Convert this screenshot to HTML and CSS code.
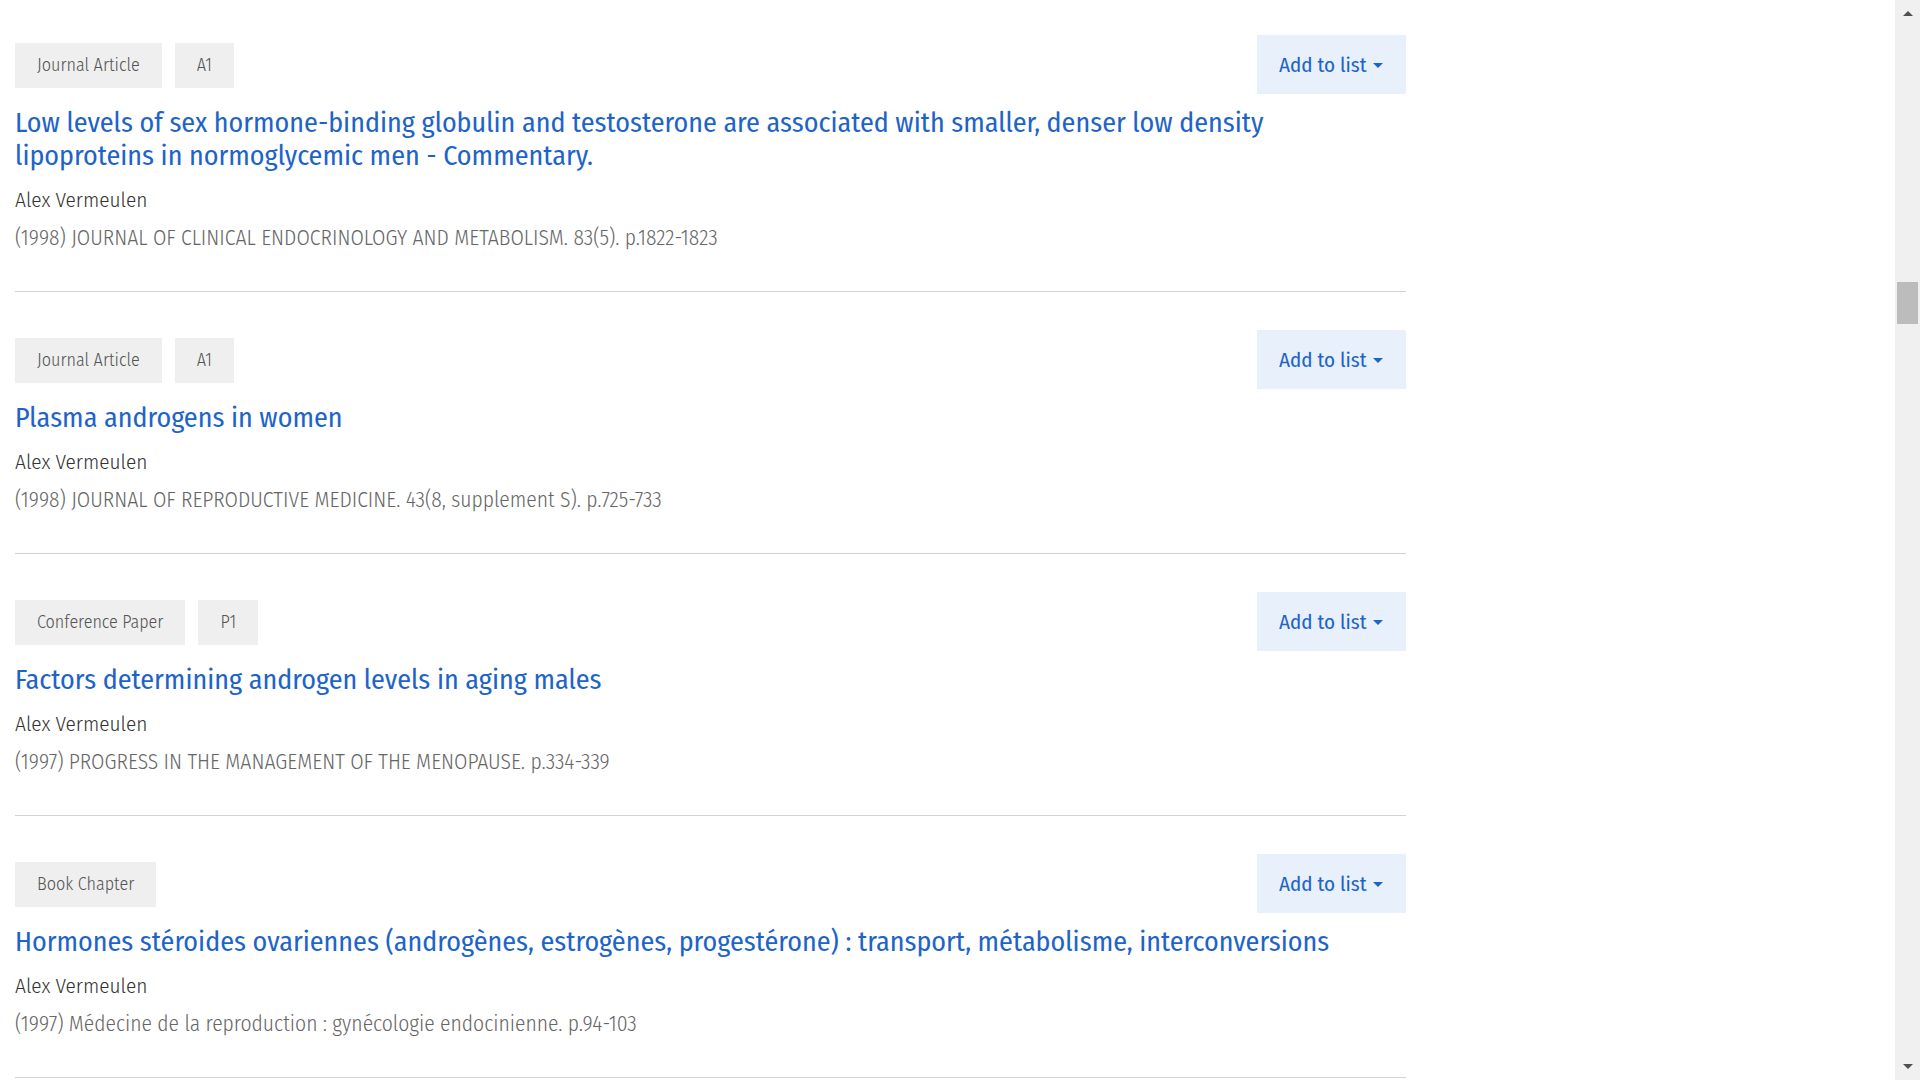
FILE: index.html
```html
<!DOCTYPE html>
<html lang="en">
<head>
<meta charset="utf-8">
<title>Publications</title>
<link rel="stylesheet" href="styles.css">
</head>
<body>
<div class="page">
  <main class="results">
    <article class="pub">
      <div class="pub-head">
        <div class="tags"><span class="tag">Journal Article</span><span class="tag">A1</span></div>
        <button class="add-btn">Add to list<span class="caret"></span></button>
      </div>
      <h2 class="pub-title"><a href="#">Low levels of sex hormone-binding globulin and testosterone are associated with smaller, denser low density lipoproteins in normoglycemic men - Commentary.</a></h2>
      <div class="pub-author">Alex Vermeulen</div>
      <div class="pub-meta">(1998) JOURNAL OF CLINICAL ENDOCRINOLOGY AND METABOLISM. 83(5). p.1822-1823</div>
    </article>
    <article class="pub">
      <div class="pub-head">
        <div class="tags"><span class="tag">Journal Article</span><span class="tag">A1</span></div>
        <button class="add-btn">Add to list<span class="caret"></span></button>
      </div>
      <h2 class="pub-title"><a href="#">Plasma androgens in women</a></h2>
      <div class="pub-author">Alex Vermeulen</div>
      <div class="pub-meta">(1998) JOURNAL OF REPRODUCTIVE MEDICINE. 43(8, supplement S). p.725-733</div>
    </article>
    <article class="pub">
      <div class="pub-head">
        <div class="tags"><span class="tag">Conference Paper</span><span class="tag">P1</span></div>
        <button class="add-btn">Add to list<span class="caret"></span></button>
      </div>
      <h2 class="pub-title"><a href="#">Factors determining androgen levels in aging males</a></h2>
      <div class="pub-author">Alex Vermeulen</div>
      <div class="pub-meta">(1997) PROGRESS IN THE MANAGEMENT OF THE MENOPAUSE. p.334-339</div>
    </article>
    <article class="pub">
      <div class="pub-head">
        <div class="tags"><span class="tag">Book Chapter</span></div>
        <button class="add-btn">Add to list<span class="caret"></span></button>
      </div>
      <h2 class="pub-title"><a href="#">Hormones stéroides ovariennes (androgènes, estrogènes, progestérone) : transport, métabolisme, interconversions</a></h2>
      <div class="pub-author">Alex Vermeulen</div>
      <div class="pub-meta">(1997) Médecine de la reproduction : gynécologie endocinienne. p.94-103</div>
    </article>
  </main>
  <aside class="scrollbar">
    <span class="sb-arrow sb-up"></span>
    <div class="sb-track"><div class="sb-thumb"></div></div>
    <span class="sb-arrow sb-down"></span>
  </aside>
</div>
</body>
</html>
```
FILE: styles.css
```css
html, body {
  margin: 0;
  padding: 0;
  height: 100%;
  overflow: hidden;
  background: #fff;
}
body {
  font-family: "Fira Sans Condensed", "Roboto Condensed", "DejaVu Sans Condensed", sans-serif;
  color: #333;
}
.page {
  display: flex;
  height: 100vh;
}
.results {
  flex: 1;
  margin-top: -3px;
  padding-left: 15px;
}
.pub {
  width: 1391px;
  padding: 38px 0 34px;
  border-bottom: 1px solid #d2d2d2;
}
.pub-head {
  display: flex;
  justify-content: space-between;
  align-items: center;
  height: 59px;
}
.tags {
  display: flex;
  gap: 13px;
  margin-top: 1px;
}
.tag {
  display: flex;
  align-items: center;
  height: 45px;
  padding: 0 22px;
  background: #efefef;
  color: #555;
  font-size: 18px;
  font-weight: 300;
}
.add-btn {
  display: flex;
  align-items: center;
  height: 59px;
  width: 149px;
  padding: 0 22px;
  border: 0;
  background: #e8f0fc;
  color: #1e64c8;
  font-family: inherit;
  font-size: 21px;
  font-weight: 400;
  cursor: pointer;
}
.caret {
  width: 0;
  height: 0;
  margin-left: 6px;
  margin-top: 2px;
  border-left: 5px solid transparent;
  border-right: 5px solid transparent;
  border-top: 5px solid #1e64c8;
}
.pub-title {
  margin: 12px 0 9px;
  font-size: 28px;
  line-height: 33px;
  font-weight: 400;
}
.pub-title a {
  color: #1e64c8;
  text-decoration: none;
}
.pub-author {
  font-size: 21.2px;
  line-height: 38px;
  font-weight: 300;
  color: #333;
}
.pub-meta {
  font-size: 21.5px;
  line-height: 38px;
  font-weight: 300;
  color: #666;
}
.scrollbar {
  width: 25px;
  flex: none;
  background: #f0f0f0;
  display: flex;
  flex-direction: column;
  align-items: center;
}
.sb-arrow {
  width: 0;
  height: 0;
  border-left: 5.5px solid transparent;
  border-right: 5.5px solid transparent;
}
.sb-up {
  margin-top: 11px;
  border-bottom: 5px solid #505050;
}
.sb-down {
  margin-bottom: 11px;
  border-top: 5px solid #505050;
}
.sb-track {
  flex: 1;
  width: 100%;
  display: flex;
  justify-content: center;
}
.sb-thumb {
  width: 21px;
  height: 42px;
  margin-top: 266px;
  background: #bcbcbc;
}
```
